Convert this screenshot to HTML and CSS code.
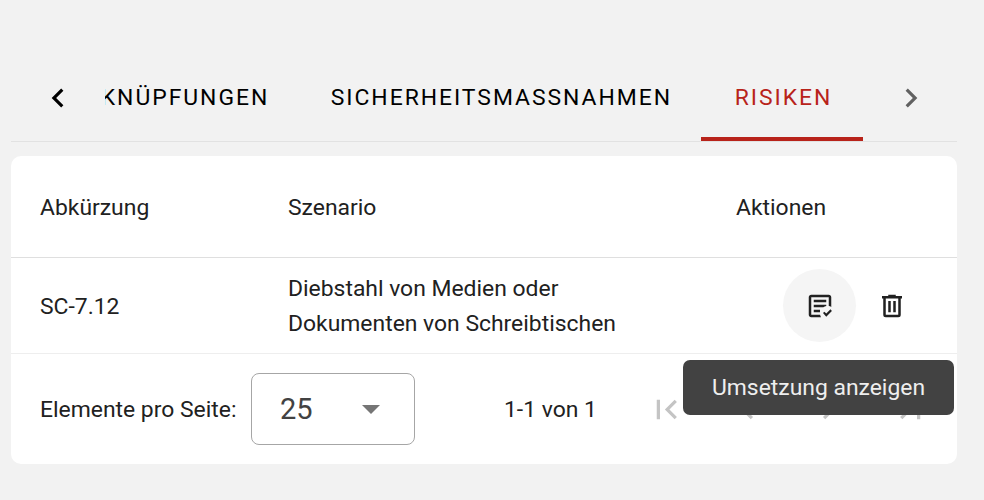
FILE: index.html
```html
<!DOCTYPE html>
<html lang="de">
<head>
<meta charset="utf-8">
<title>Risiken</title>
<link rel="stylesheet" href="styles.css">
</head>
<body>
<nav class="tabs">
  <button class="tabs-arrow" aria-label="Zurück"><svg class="icon-arrow" viewBox="0 0 24 24"><path d="M15.41,16.58L10.83,12L15.41,7.41L14,6L8,12L14,18L15.41,16.58Z"/></svg></button>
  <div class="tabs-window">
    <button class="tab">VERKNÜPFUNGEN</button>
    <button class="tab">SICHERHEITSMASSNAHMEN</button>
    <button class="tab tab-active">RISIKEN</button>
  </div>
  <button class="tabs-arrow tabs-arrow-next" aria-label="Weiter"><svg class="icon-arrow" viewBox="0 0 24 24"><path d="M8.59,16.58L13.17,12L8.59,7.41L10,6L16,12L10,18L8.59,16.58Z"/></svg></button>
</nav>
<main class="card">
  <div class="row row-head">
    <div>Abkürzung</div>
    <div>Szenario</div>
    <div>Aktionen</div>
  </div>
  <div class="row row-item">
    <div class="code">SC-7.12</div>
    <div class="scenario">Diebstahl von Medien oder Dokumenten von Schreibtischen</div>
    <div class="actions">
      <button class="action action-hover" aria-label="Umsetzung anzeigen"><svg class="icon-action" viewBox="0 0 24 24"><path d="M17,20.5L14.4,17.6L15.5,16.5L17,18L20.4,14.6L21.5,15.9L17,20.5M12.8,21H5C3.89,21 3,20.11 3,19V5C3,3.89 3.89,3 5,3H19C20.11,3 21,3.89 21,5V12.8C20.39,12.45 19.72,12.2 19,12.08V5H5V19H12.08C12.2,19.72 12.45,20.39 12.8,21M12,17H7V15H12V17M14.68,13H7V11H17V12.08C16.15,12.22 15.37,12.54 14.68,13M17,9H7V7H17V9"/></svg></button>
      <button class="action" aria-label="Löschen"><svg class="icon-action" viewBox="0 0 24 24"><path d="M9,3V4H4V6H5V19A2,2 0 0,0 7,21H17A2,2 0 0,0 19,19V6H20V4H15V3H9M7,6H17V19H7V6M9,8V17H11V8H9M13,8V17H15V8H13Z"/></svg></button>
      <div class="tooltip">Umsetzung anzeigen</div>
    </div>
  </div>
  <div class="footer">
    <span class="footer-label">Elemente pro Seite:</span>
    <div class="select"><span>25</span><svg class="icon-caret" viewBox="0 0 18 9"><path d="M0,0H18L9,9Z"/></svg></div>
    <span class="range">1-1 von 1</span>
    <div class="pager">
      <button aria-label="Erste Seite"><svg class="icon-page" viewBox="0 0 24 24"><path d="M18.41,16.59L13.82,12L18.41,7.41L17,6L11,12L17,18L18.41,16.59M6,6H8V18H6V6Z"/></svg></button>
      <button aria-label="Vorherige Seite"><svg class="icon-page" viewBox="0 0 24 24"><path d="M15.41,16.58L10.83,12L15.41,7.41L14,6L8,12L14,18L15.41,16.58Z"/></svg></button>
      <button aria-label="Nächste Seite"><svg class="icon-page" viewBox="0 0 24 24"><path d="M8.59,16.58L13.17,12L8.59,7.41L10,6L16,12L10,18L8.59,16.58Z"/></svg></button>
      <button aria-label="Letzte Seite"><svg class="icon-page" viewBox="0 0 24 24"><path d="M5.59,7.41L10.18,12L5.59,16.59L7,18L13,12L7,6L5.59,7.41M16,6H18V18H16V6Z"/></svg></button>
    </div>
  </div>
</main>
</body>
</html>
```
FILE: styles.css
```css
* {
  box-sizing: border-box;
}

body {
  margin: 0;
  padding: 54px 27px 0 11px;
  height: 500px;
  overflow: hidden;
  background: #f2f2f2;
  color: #212121;
  font: 22.9px/35px Roboto, sans-serif;
}

button {
  display: flex;
  align-items: center;
  justify-content: center;
  margin: 0;
  padding: 0;
  border: 0;
  background: none;
  color: inherit;
  font: inherit;
}

svg {
  display: block;
  flex: none;
  fill: currentColor;
}

.tabs {
  display: flex;
  height: 88px;
  border-bottom: 1px solid #e2e2e2;
  color: #000;
}

.tabs-arrow {
  flex: 0 0 94px;
}

.tabs-arrow-next {
  padding-left: 1px;
  color: #616161;
}

.icon-arrow {
  width: 38px;
  height: 38px;
}

.tabs-window {
  display: flex;
  flex: 1;
  justify-content: flex-end;
  min-width: 0;
  overflow: hidden;
}

.tab {
  flex: none;
  padding: 0 29px 0 32.5px;
  letter-spacing: 1.97px;
  border-top: 4px solid transparent;
  border-bottom: 4px solid transparent;
}

.tab-active {
  width: 162px;
  padding: 0 0 0 3px;
  color: #b8231a;
  border-bottom-color: #b8231a;
}

.card {
  margin-top: 14px;
  height: 308px;
  border-radius: 10px;
  background: #fff;
}

.row {
  display: grid;
  grid-template-columns: 248px 448px 1fr;
  align-items: center;
  padding-left: 29px;
}

.row-head {
  height: 102px;
  padding-top: 2px;
  border-bottom: 1px solid #dfdfdf;
}

.row-item {
  height: 96px;
  border-bottom: 1px solid #eee;
}

.code {
  padding-top: 2px;
}

.scenario {
  width: 345px;
}

.actions {
  position: relative;
  display: flex;
  padding-left: 47px;
}

.action {
  width: 72px;
  height: 73px;
  border-radius: 50%;
}

.action-hover {
  width: 73px;
  background: #f5f5f5;
}

.icon-action {
  width: 30px;
  height: 30px;
}

.tooltip {
  position: absolute;
  top: 91px;
  right: 3px;
  width: 271px;
  height: 55px;
  border-radius: 7px;
  background: #424242;
  color: #eee;
  line-height: 55px;
  text-align: center;
}

.footer {
  display: flex;
  align-items: center;
  height: 110px;
  padding-left: 29px;
}

.footer-label {
  width: 211px;
}

.select {
  display: flex;
  align-items: center;
  justify-content: space-between;
  width: 164px;
  height: 72px;
  padding: 0 34px 0 28px;
  border: 1px solid #a6a6a6;
  border-radius: 8px;
  color: #424242;
  font-size: 29px;
}

.icon-caret {
  width: 18px;
  height: 9px;
  color: #757575;
}

.range {
  width: 122px;
  margin-left: 89px;
}

.pager {
  display: flex;
  color: #c4c4c4;
}

.pager button {
  width: 81.2px;
}

.icon-page {
  width: 39px;
  height: 39px;
}
```
